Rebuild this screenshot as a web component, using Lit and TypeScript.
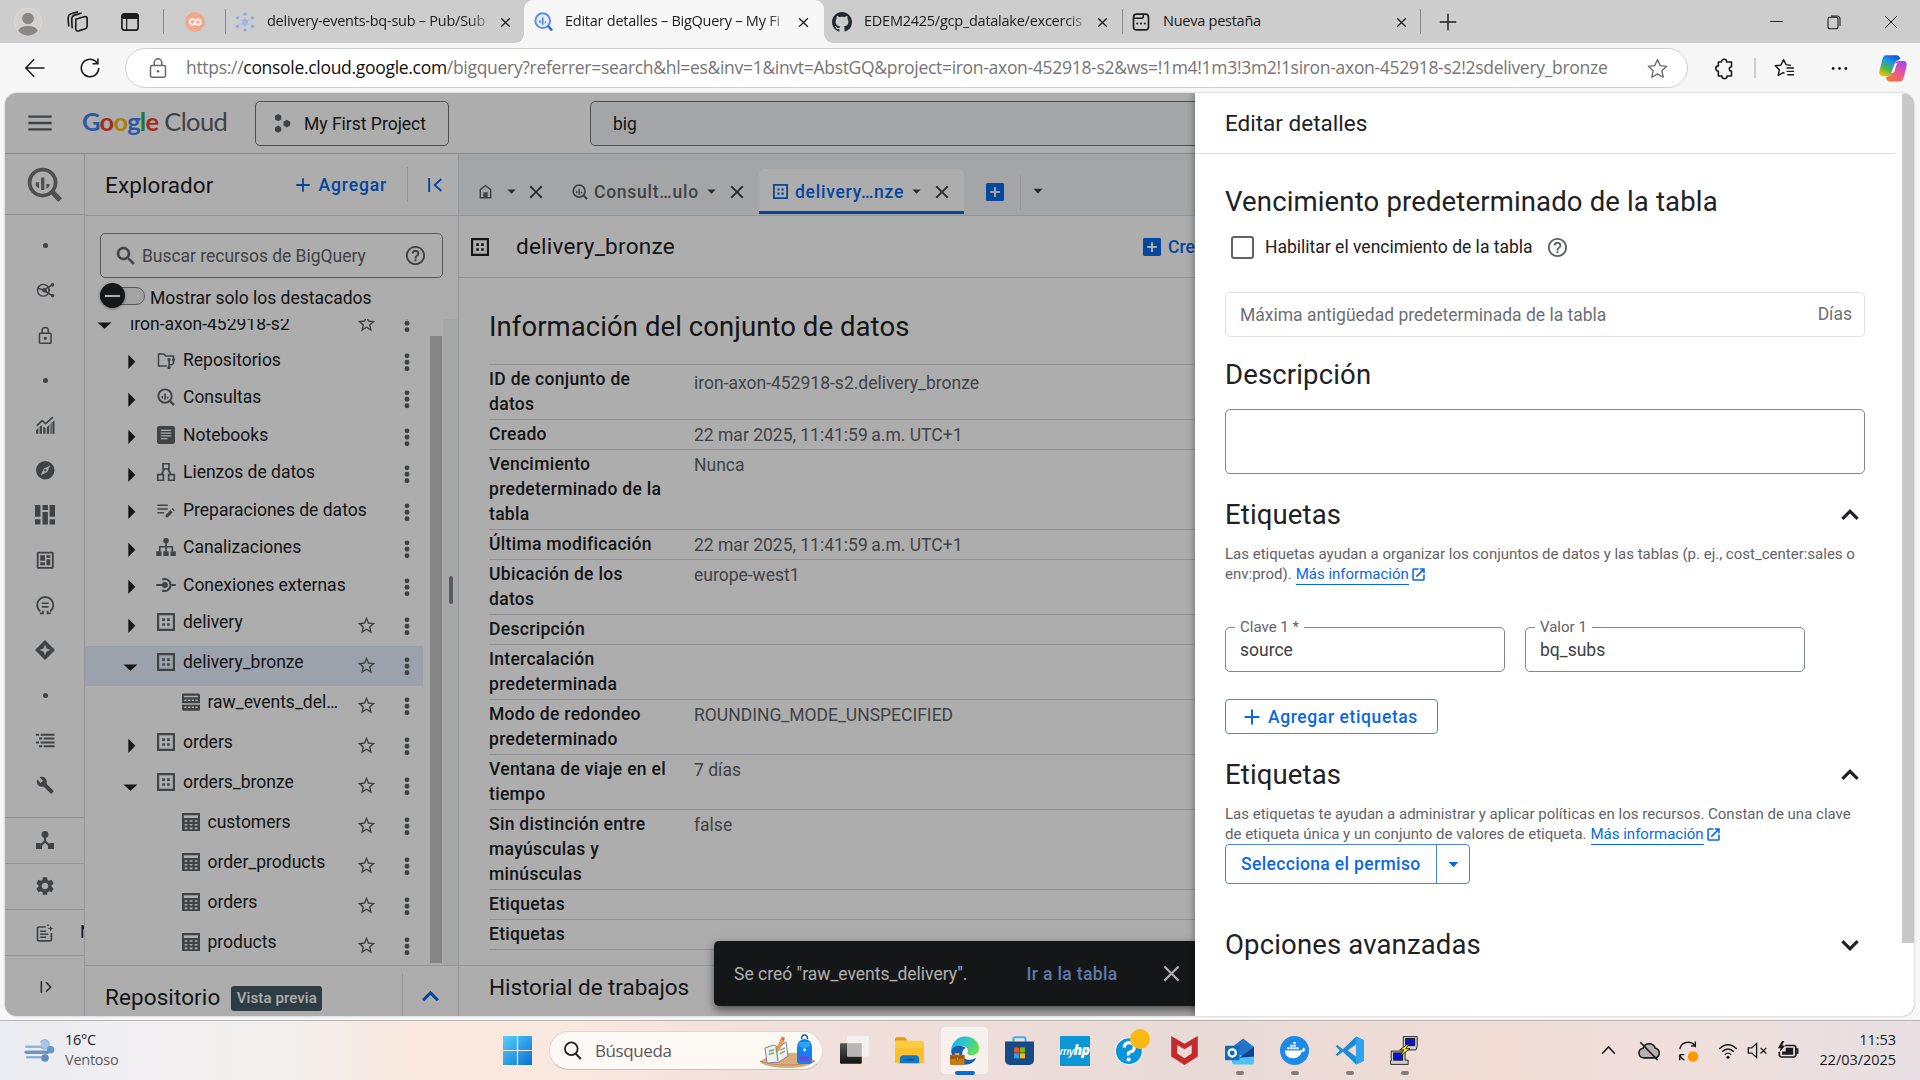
import { LitElement, html, css, svg, nothing } from "lit";
import { customElement, property } from "lit/decorators.js";

const ICONS: Record<string, unknown> = {
  menu: svg`<path d="M2 18.5h20v-2H2zm0-5.5h20v-2H2zm0-7.5v2h20v-2z"/>`,
  close: svg`<path d="M19 6.41 17.59 5 12 10.59 6.41 5 5 6.41 10.59 12 5 17.59 6.41 19 12 13.41 17.59 19 19 17.59 13.41 12z"/>`,
  thinClose: svg`<path d="M4 4l16 16M20 4L4 20" fill="none" stroke="currentColor" stroke-width="2.400"/>`,
  winClose: svg`<path d="M3 3l18 18M21 3L3 21" fill="none" stroke="currentColor" stroke-width="1.5"/>`,
  search: svg`<path d="M15.5 14h-.79l-.28-.27A6.47 6.47 0 0 0 16 9.5 6.5 6.5 0 1 0 9.5 16c1.61 0 3.09-.59 4.23-1.57l.27.28v.79l5 4.99L20.49 19zm-6 0C7.01 14 5 11.99 5 9.5S7.01 5 9.5 5 14 7.01 14 9.5 11.99 14 9.5 14z" stroke="currentColor" stroke-width=".6"/>`,
  help: svg`<path d="M11 18h2v-2h-2zm1-16C6.48 2 2 6.48 2 12s4.48 10 10 10 10-4.48 10-10S17.52 2 12 2zm0 18c-4.41 0-8-3.59-8-8s3.59-8 8-8 8 3.59 8 8-3.59 8-8 8zm0-14c-2.21 0-4 1.79-4 4h2c0-1.1.9-2 2-2s2 .9 2 2c0 2-3 1.75-3 5h2c0-2.25 3-2.5 3-5 0-2.21-1.79-4-4-4z"/>`,
  star: svg`<path d="M22 9.24l-7.19-.62L12 2 9.19 8.63 2 9.24l5.46 4.73L5.82 21 12 17.27 18.18 21l-1.63-7.03zM12 15.4l-3.76 2.27 1-4.28-3.32-2.88 4.38-.38L12 6.1l1.71 4.04 4.38.38-3.32 2.88 1 4.28z"/>`,
  dots: svg`<circle cx="12" cy="3.8" r="3.3"/><circle cx="12" cy="12.4" r="3.3"/><circle cx="12" cy="21" r="3.3"/>`,
  add: svg`<path d="M21 13.2h-7.8V21h-2.4v-7.8H3v-2.4h7.8V3h2.4v7.8H21z"/>`,
  addBox: svg`<path fill-rule="evenodd" d="M2 0h20a2 2 0 0 1 2 2v20a2 2 0 0 1-2 2H2a2 2 0 0 1-2-2V2a2 2 0 0 1 2-2zm8.6 5.500v5.100H5.500v2.800h5.100v5.100h2.800v-5.100h5.100v-2.800h-5.100V5.500z"/>`,
  up: svg`<path d="M12 7.200l-7 7 1.800 1.800L12 10.800l5.200 5.200 1.800-1.800z"/>`,
  down: svg`<path d="M12 16.800l-7-7L6.800 8l5.200 5.200L17.200 8 19 9.800z"/>`,
  caret: svg`<path d="M3 7.500h18L12 17z"/>`,
  triRight: svg`<path d="M7.500 2.500L17.500 12.500 7.500 22.500z"/>`,
  triDown: svg`<path d="M.5 10.500h20l-10 9z"/>`,
  collapseLine: svg`<path d="M3.200 1.500v21M21.500 3L11.500 12l10 9" fill="none" stroke="currentColor" stroke-width="2.800"/>`,
  expandLine: svg`<path d="M4 2v20M12 4l8 8-8 8" fill="none" stroke="currentColor" stroke-width="2.600"/>`,
  hex: svg`<path d="M6.500 0l4 2.300v4.600l-4 2.300-4-2.300V2.300zM6.500 14.600l4 2.300v4.600l-4 2.300-4-2.300v-4.600zM17.500 7.300l4.300 2.400v4.800l-4.300 2.400-4.300-2.400V9.700z"/>`,
  bq: svg`<circle cx="10.700" cy="10.700" r="8.900" fill="none" stroke="currentColor" stroke-width="2.600"/><path d="M6 10.500h2.200v4.300A6 6 0 0 1 6 12.600zM9.700 7.200h2.200v8.600H9.700zM13.300 11.700h2.200v1.200a6 6 0 0 1-2.200 2z"/><path d="M17 18.600l1.700-1.700 4.600 4.600-1.800 1.800z" stroke="currentColor"/>`,
  hub: svg`<circle cx="9.500" cy="12" r="7.600" fill="none" stroke="currentColor" stroke-width="1.800"/><path d="M2 9l8 3 11-7M10 12l11 7" fill="none" stroke="currentColor" stroke-width="2"/><circle cx="11" cy="12" r="3"/><circle cx="21.500" cy="5" r="2.300"/><circle cx="21.500" cy="19" r="2.300"/><circle cx="17" cy="12" r="1.500"/>`,
  lock: svg`<path d="M18.500 8.500H17V6A5 5 0 0 0 7 6v2.500H5.500a2 2 0 0 0-2 2v11a2 2 0 0 0 2 2h13a2 2 0 0 0 2-2v-11a2 2 0 0 0-2-2zM9 6a3 3 0 0 1 6 0v2.500H9zm9.500 15.500h-13v-11h13zM12 18.200a2.200 2.200 0 1 0 0-4.400 2.200 2.200 0 0 0 0 4.400z"/>`,
  chart: svg`<path d="M1 12.500L8 6l4.500 4L22 1.500" fill="none" stroke="currentColor" stroke-width="2.200"/><path d="M0 18l3-2.500V23H0zM4.700 14l3-2.400V23h-3zM9.400 14l3 1.500V23h-3zM14.100 14.500l3-3V23h-3zM18.800 10L24 5.500V23h-5.200z"/><path d="M20.800 9v14" stroke="#fff" stroke-width="1"/>`,
  explore: svg`<path d="M12 10.500a1.500 1.500 0 1 0 0 3 1.500 1.500 0 0 0 0-3zM12 0a12 12 0 1 0 0 24 12 12 0 0 0 0-24zm2.400 14.400L6 18.500l4.100-8.600 8.400-4.400z"/>`,
  blocks: svg`<path d="M0 0h6.500v14H0zM0 17h6.500v6.500H0zM9 0h6.500v6H9zM9 8.500h6.500v15H9zM17.500 0H24v14h-6.500zM17.500 17H24v6.500h-6.500z"/>`,
  dash: svg`<path fill-rule="evenodd" d="M3 1h18a2 2 0 0 1 2 2v18a2 2 0 0 1-2 2H3a2 2 0 0 1-2-2V3a2 2 0 0 1 2-2zm.4 2.400v17.200h17.200V3.400z"/><path d="M5.500 5.500h6v7h-6zM13.500 5.500h5v3.200h-5zM5.500 14.500h6v4h-6zM13.500 10.700h5v7.800h-5z"/>`,
  storage: svg`<path d="M5.500 20A10.500 10.500 0 1 1 18.500 20M5 22.500h4V19M19 22.500h-4V19" fill="none" stroke="currentColor" stroke-width="2.400"/><path d="M7.500 8.300h9v2.200h-9zM7.500 13h9v2.200h-9z"/>`,
  diamond: svg`<path fill-rule="evenodd" d="M12 0l12 12-12 12L0 12zm0 5.500L10.200 10.200 5.500 12l4.700 1.800L12 18.500l1.800-4.700 4.700-1.800-4.700-1.800z"/>`,
  list: svg`<path d="M0 3.500h4v2.600H0zM6 3.500h18v2.600H6zM4 8.500h4v2.600H4zM10 8.500h14v2.600H10zM0 13.500h4v2.600H0zM6 13.500h18v2.600H6zM4 18.500h4v2.600H4zM10 18.500h14v2.600H10z"/>`,
  build: svg`<path d="M22.700 19l-9.100-9.100c.9-2.300.4-5-1.500-6.900-2-2-5-2.400-7.400-1.300L9 6 6 9 1.600 4.700C.4 7.100.9 10.100 2.900 12.100c1.900 1.900 4.600 2.400 6.900 1.500l9.100 9.100c.4.400 1 .4 1.400 0l2.300-2.300c.5-.4.5-1.100.1-1.400z"/>`,
  share: svg`<circle cx="12" cy="4.500" r="4.500"/><path d="M10.700 7h2.600v6l4.700 4.200V16H24v8h-8v-4.400l-4-4-4 4V24H0v-8h6v1.200l4.700-4.200z"/>`,
  gear: svg`<path d="M19.140 12.940c.04-.3.06-.61.06-.94 0-.32-.02-.64-.07-.94l2.030-1.580c.18-.14.23-.41.12-.61l-1.920-3.320c-.12-.22-.37-.29-.59-.22l-2.390.96c-.5-.38-1.030-.7-1.620-.94l-.36-2.540c-.04-.24-.24-.41-.48-.41h-3.840c-.24 0-.43.17-.47.41l-.36 2.540c-.59.24-1.130.57-1.620.94l-2.390-.96c-.22-.08-.47 0-.59.22L2.740 8.870c-.12.21-.08.47.12.61l2.030 1.580c-.05.3-.09.63-.09.94s.02.64.07.94l-2.030 1.580c-.18.14-.23.41-.12.61l1.920 3.320c.12.22.37.29.59.22l2.390-.96c.5.38 1.030.7 1.620.94l.36 2.540c.05.24.24.41.48.41h3.840c.24 0 .44-.17.47-.41l.36-2.540c.59-.24 1.130-.56 1.620-.94l2.390.96c.22.08.47 0 .59-.22l1.920-3.320c.12-.22.07-.47-.12-.61zM12 15.600c-1.980 0-3.600-1.620-3.600-3.600s1.620-3.600 3.600-3.600 3.600 1.620 3.600 3.600-1.620 3.600-3.600 3.600z"/>`,
  notes: svg`<path d="M13 4H4a2 2 0 0 0-2 2v14.500a2 2 0 0 0 2 2h14.500a2 2 0 0 0 2-2V12" fill="none" stroke="currentColor" stroke-width="2.300"/><path d="M5.500 8.500h8v2h-8zM5.500 12.500h11v2h-11zM5.500 16.500h8v2h-8zM19.500 2l1 3 3 1-3 1-1 3-1-3-3-1 3-1z"/><circle cx="16" cy="1.500" r="1.200"/>`,
  repo: svg`<path d="M13 20H2V4h7l2.500 2.500H22V10" fill="none" stroke="currentColor" stroke-width="2"/><path d="M16 12v9M22 12v3.500q0 2.500-6 3" fill="none" stroke="currentColor" stroke-width="2"/><circle cx="16" cy="11.500" r="2.200"/><circle cx="22" cy="11.500" r="2.200"/><circle cx="16" cy="22" r="2.200"/>`,
  notebook: svg`<path fill-rule="evenodd" d="M3 0h18a3 3 0 0 1 3 3v18a3 3 0 0 1-3 3H3a3 3 0 0 1-3-3V3a3 3 0 0 1 3-3zm2 5v1.600h14V5zm0 3.700v1.600h14V8.700zm0 3.700V14h14v-1.600zm0 3.700v1.600h9v-1.600z"/>`,
  canvas: svg`<path d="M8 1h8v7H8zM1 15.500h7.500v7.500H1zM15.500 15.500H23v7.500h-7.500zM9.500 8L6 15.500M14.500 8l4 7.500" fill="none" stroke="currentColor" stroke-width="2.300"/>`,
  prep: svg`<path d="M1 3.500h14v2.200H1zM1 8.500h14v2.200H1zM1 13.500h9v2.200H1zM12 20.500v-3l6.500-6.500 3 3L15 20.500zM20 9.600l1.300-1.300 3 3L23 12.500z" transform="translate(-.5 1)"/>`,
  tree: svg`<circle cx="12" cy="3.700" r="3.700"/><path d="M11 6h2.200v12H11zM2.500 10.700h19V18h-2.200v-5.200H4.700V18H2.500z"/><path d="M-1 17.500h7V24h-7zM8.500 17.500h7V24h-7zM18 17.500h7V24h-7z"/>`,
  link: svg`<circle cx="10.500" cy="12" r="4"/><path d="M-1 10.800h11v2.400H-1zM19 10.800h6v2.400h-6z"/><path d="M7 4.600a8 8 0 1 1 0 14.800" fill="none" stroke="currentColor" stroke-width="2.700"/>`,
  dataset: svg`<path fill-rule="evenodd" d="M0 0h24v24H0zM2.900 2.900v18.200h18.200V2.900z"/><path d="M7 7h3.500v3.500H7zM13.500 7H17v3.500h-3.500zM7 13.500h3.500V17H7zM13.500 13.500H17V17h-3.500z"/>`,
  table: svg`<path fill-rule="evenodd" d="M0 0h24v24H0zM2.500 3v3.500h19V3zM3.500 9.500v2.300h3.700V9.500zm6.700 0v2.300h3.700V9.500zm6.700 0v2.300h3.700V9.500zM3.500 14.500v2.300h3.700v-2.300zm6.700 0v2.300h3.700v-2.300zm6.700 0v2.300h3.700v-2.300zM3.500 19.300v2.300h3.700v-2.300zm6.700 0v2.300h3.700v-2.300zm6.700 0v2.300h3.700v-2.300z"/>`,
  tableSplit: svg`<path fill-rule="evenodd" d="M2 .5h20a2 2 0 0 1 2 2v11H0v-11a2 2 0 0 1 2-2zm.5 3v2.200h19V3.500zm.5 5v2h3v-2zm5 0v2h3v-2zm5 0v2h3v-2zm5 0v2h3v-2zM0 15.500h24v6a2 2 0 0 1-2 2H2a2 2 0 0 1-2-2zm3 2.500v2h3v-2zm5 0v2h3v-2zm5 0v2h3v-2zm5 0v2h3v-2z"/>`,
  home: svg`<path fill-rule="evenodd" d="M12 1l9.500 7.500V23h-19V8.500zm0 2.900L4.900 9.500v11.200h14.200V9.500z"/><path d="M8.500 13h7v8h-7z"/>`,
  ext: svg`<path d="M19.500 19.500h-15v-15H12V2H4.500A2.500 2.500 0 0 0 2 4.500v15A2.500 2.500 0 0 0 4.500 22h15a2.500 2.500 0 0 0 2.500-2.500V12h-2.500zM14 2v2.500h3.700L7.700 14.500l1.800 1.800 10-10V10H22V2z"/>`,
  back: svg`<path d="M23.500 12H1M11 1.500L.9 12 11 22.500" fill="none" stroke="currentColor" stroke-width="1.800"/>`,
  refresh: svg`<path d="M22.500 12A10.500 10.500 0 1 1 18.500 3.800L21 6.500M21.500 .5v6.500H15" fill="none" stroke="currentColor" stroke-width="1.800"/>`,
  urlLock: svg`<path d="M5 9h14a2 2 0 0 1 2 2v10a2 2 0 0 1-2 2H5a2 2 0 0 1-2-2V11a2 2 0 0 1 2-2zM7.500 9V5.500a4.500 4.500 0 0 1 9 0V9" fill="none" stroke="currentColor" stroke-width="1.800"/><circle cx="12" cy="16" r="1.500"/>`,
  urlStar: svg`<path d="M12 1.800l3.100 6.900 7.400.8-5.500 5 1.500 7.500-6.500-3.800L5.500 22 7 14.500l-5.500-5 7.400-.8z" fill="none" stroke="currentColor" stroke-width="1.500" stroke-linejoin="round"/>`,
  puzzle: svg`<path d="M8.500 4.500a3 3 0 0 1 6 0H20v5.500a2.500 2.500 0 0 0 0 5V20.500h-5a3 3 0 0 1-6 0H5V15a3 3 0 0 1 0-6V4.500z" fill="none" stroke="currentColor" stroke-width="1.800" stroke-linejoin="round"/>`,
  favs: svg`<path d="M12.500 18.500l-1.500-1L5 21l1.500-7-5-4.700 6.800-.8L11.500 2l3 6 6 .8M15 12h9M15 16h9M16 20h8" fill="none" stroke="currentColor" stroke-width="1.700" stroke-linejoin="round"/>`,
  more: svg`<circle cx="3" cy="12" r="2"/><circle cx="12" cy="12" r="2"/><circle cx="21" cy="12" r="2"/>`,
  copilot: svg`<path d="M6 1h9q2.500 0 3.300 3L16 5.500q-2 0-3 3.500l-2 7q-1 3-4 3H3q-3.500 0-2.500-5l2-8Q3.500 1 6 1z" fill="url(#cpA)"/><path d="M18 23.500H9q-2.500 0-3-3.500l2-1q2 0 3-3l2-7q1-3 4-3h4q3.500 0 2.500 5l-2 8q-1.200 4.500-3.500 4.500z" fill="url(#cpB)"/><path d="M13.500 8.500l-3 7.500h1.500q1-.2 1.500-2l1.500-5q.3-.8 1.500-1h-1q-1.500-.3-2 .5z" fill="#fff"/><defs><linearGradient id="cpA" x1=".7" y1="0" x2=".2" y2="1"><stop offset="0" stop-color="#1552d8"/><stop offset=".35" stop-color="#1a9be8"/><stop offset=".65" stop-color="#4fb44a"/><stop offset="1" stop-color="#f5c400"/></linearGradient><linearGradient id="cpB" x1=".8" y1="0" x2=".2" y2="1"><stop offset="0" stop-color="#a04be8"/><stop offset=".5" stop-color="#ee5597"/><stop offset="1" stop-color="#f5792a"/></linearGradient></defs>`,
  avatar: svg`<circle cx="12" cy="12" r="11.700" fill="#d3d1cd" stroke="#e4e2df" stroke-width=".6"/><circle cx="12" cy="9" r="5" fill="#8a8784"/><path d="M3.500 19.500Q5 15.500 12 15.500t8.500 4A11.700 11.700 0 0 1 12 23.700a11.700 11.700 0 0 1-8.500-4.200z" fill="#8a8784"/>`,
  workspaces: svg`<path d="M10 9.500l9.500-3q3-.7 3.500 2v9q0 2-2 2.700l-7.500 2.500q-3 .8-3.500-2zM6 19q-.500-3-.500-10.500Q5.500 6 8 5l8-2.500M2 17Q1 10 1.500 6.500 1.700 4.200 4 3.500L12 1" fill="none" stroke="currentColor" stroke-width="1.900" stroke-linecap="round"/>`,
  sideTabs: svg`<rect x="1.200" y="1.200" width="21.600" height="21.600" rx="3" fill="none" stroke="currentColor" stroke-width="2.200"/><path d="M1 3a2 2 0 0 1 2-2h18a2 2 0 0 1 2 2v5H1z"/><path d="M7.500 8v15" stroke="currentColor" stroke-width="1.800"/>`,
  moodle: svg`<circle cx="12" cy="12" r="12" fill="#f0a88c"/><path d="M11.500 9.800A3.300 3.300 0 1 0 11.500 14.200L13 10A3.300 3.300 0 1 1 13 14.200" fill="none" stroke="#f7e8e0" stroke-width="2.700"/>`,
  pubsub: svg`<g fill="#8ea9e6"><circle cx="12" cy="12" r="3.500"/><circle cx="12" cy="2.500" r="2"/><circle cx="12" cy="21.500" r="2"/><circle cx="3" cy="7" r="2"/><circle cx="21" cy="7" r="2"/><circle cx="3" cy="17" r="2"/><circle cx="21" cy="17" r="2"/></g><path d="M12 6v12M6.500 9l11 6M17.500 9L6.500 15" stroke="#a9bdea" stroke-width="1.600"/>`,
  bqBlue: svg`<circle cx="11" cy="11" r="9.300" fill="#e9f0fd" stroke="#5b8df0" stroke-width="2.500"/><path d="M6.500 10.500h2v4a5 5 0 0 1-2-2zM10 7h2v9h-2zM13.500 12h2v1a5 5 0 0 1-2 2z" fill="#4a7fe8"/><path d="M17 18.500l1.500-1.500 5 5-2 1.800z" fill="#2f66d8" stroke="#2f66d8"/>`,
  newTab: svg`<rect x="2" y="1.500" width="20" height="21" rx="4" fill="none" stroke="currentColor" stroke-width="2.200"/><path d="M2 7h11q2 0 2-2V1.500" fill="none" stroke="currentColor" stroke-width="2"/><circle cx="7" cy="14" r="1.400"/><circle cx="12" cy="14" r="1.400"/><circle cx="17" cy="14" r="1.400"/>`,
  github: svg`<path transform="scale(1.5)" d="M8 0C3.580 0 0 3.580 0 8c0 3.540 2.290 6.530 5.470 7.590.4.070.55-.17.55-.38 0-.19-.01-.82-.01-1.490-2.010.37-2.530-.49-2.690-.94-.09-.23-.48-.94-.82-1.130-.28-.15-.68-.52-.01-.53.63-.01 1.080.58 1.230.82.72 1.210 1.870.87 2.330.66.070-.52.28-.87.51-1.070-1.780-.2-3.640-.89-3.640-3.950 0-.87.31-1.590.82-2.150-.08-.2-.36-1.020.080-2.120 0 0 .67-.21 2.200.82.64-.18 1.320-.27 2-.27s1.360.09 2 .27c1.530-1.040 2.200-.82 2.200-.82.44 1.100.16 1.920.08 2.120.51.56.82 1.270.82 2.150 0 3.070-1.870 3.750-3.650 3.950.29.25.54.73.54 1.480 0 1.070-.01 1.930-.01 2.200 0 .21.15.46.55.38A8.010 8.010 0 0 0 16 8c0-4.420-3.580-8-8-8z" fill="#24292f"/>`,
  minimize: svg`<path d="M2 11.300h20v1.500H2z"/>`,
  restore: svg`<path d="M5 5h10a3 3 0 0 1 3 3v11a3 3 0 0 1-3 3H6a3 3 0 0 1-3-3V8q0-3 2-3zM7.500 3h9Q21 3 21 7.500V18" fill="none" stroke="currentColor" stroke-width="1.600"/>`,
  plusThin: svg`<path d="M12 1v22M1 12h22" stroke="currentColor" stroke-width="1.900"/>`,
  wind: svg`<path d="M1 8.500h15" stroke="#8fb5da" stroke-width="2" stroke-linecap="round"/><path d="M12.500 8.700a3.700 3.700 0 1 0 0-4" fill="#a9c8e8" stroke="#8fb5da"/><path d="M1 13h17" stroke="#6d97c0" stroke-width="2.800" stroke-linecap="round"/><circle cx="20.500" cy="11" r="3" fill="#6d97c0"/><path d="M1 17h13" stroke="#88add2" stroke-width="1.800"/><circle cx="16" cy="17.500" r="3" fill="#5f8cb8"/>`,
  windows: svg`<defs><linearGradient id="wn" x1="0" y1="0" x2="1" y2="1"><stop offset="0" stop-color="#56d0ff"/><stop offset="1" stop-color="#0a6fd0"/></linearGradient></defs><path fill="url(#wn)" d="M0 0h11.500v11.500H0zM12.500 0H24v11.500H12.500zM0 12.500h11.500V24H0zM12.500 12.500H24V24H12.500z"/>`,
  winSearch: svg`<circle cx="10.500" cy="9.800" r="8" fill="none" stroke="currentColor" stroke-width="2.300"/><path d="M16 16l6.500 6.800" stroke="currentColor" stroke-width="2.500"/>`,
  taskview: svg`<defs><linearGradient id="tv" x1="0" y1="0" x2="0" y2="1"><stop offset="0" stop-color="#555"/><stop offset="1" stop-color="#111"/></linearGradient></defs><rect x="0" y="6" width="18" height="17" rx="1" fill="url(#tv)"/><rect x="6" y="0" width="18" height="17" rx="1" fill="#f6f4f4" opacity=".88"/><rect x="6" y="6" width="12" height="11" fill="#b9b6b5"/>`,
  folder: svg`<path d="M0 2.500a1.500 1.500 0 0 1 1.500-1.500H8l2.500 3H0z" fill="#e0a100"/><path d="M0 4h22.500A1.500 1.500 0 0 1 24 5.500V22.500H0z" fill="#ffcb3d"/><path d="M0 10h24v12.500H0z" fill="#fbbf2c"/><path d="M4 22.500V19q0-3 3-3h10q3 0 3 3v3.500z" fill="#1478c8"/><path d="M8 19.500h8" stroke="#0a4f94" stroke-width="1.200"/>`,
  edge: svg`<defs><linearGradient id="eg" x1="0" y1="0" x2="1" y2=".4"><stop offset="0" stop-color="#2aa8e8"/><stop offset=".55" stop-color="#2fc8c8"/><stop offset="1" stop-color="#64dc58"/></linearGradient></defs><path d="M1 12A11.500 11.500 0 0 1 12.500 .5C19.500 .5 24 5 24 10c0 4-3 6-6 6-2.500 0-4-1-3.500-2.300C16 10.500 13 8 9.500 8 5 8 2 11 1 12z" fill="url(#eg)"/><path d="M1 12c1-2.500 4.500-4.200 8-3.800 2.500.3 4.500 1.800 4.500 1.800-2.500.5-3.500 3-3.300 5 .4 3.500 4 5.500 8 4.500 1.500-.3 3-1.200 3.500-1.200C20 22 16.500 23.700 12.500 23.700 6 23.700 1 18.500 1 12z" fill="#155fb5"/><rect x="0" y="15.500" width="12" height="8.500" rx=".8" fill="#c57a16"/><path d="M0 16h12v3H0z" fill="#a35c0c"/><path d="M4 15.500v-1.500h4v1.500M5.300 18h1.400v2H5.300z" fill="#ffd27a" stroke="#8a4b06" stroke-width=".6"/>`,
  store: svg`<path d="M7 5V2.500Q7 1 8.500 1h7Q17 1 17 2.500V5" fill="none" stroke="#3bb3ee" stroke-width="1.700"/><path d="M0 4.500h24V20a4 4 0 0 1-4 4H4a4 4 0 0 1-4-4z" fill="#174a84"/><path d="M7.500 9.500h4.200v4.200H7.500z" fill="#f25022"/><path d="M12.300 9.500h4.200v4.200h-4.200z" fill="#7fba00"/><path d="M7.500 14.300h4.200v4.200H7.500z" fill="#28a8ea"/><path d="M12.300 14.300h4.200v4.200h-4.200z" fill="#ffb900"/>`,
  question: svg`<circle cx="11.500" cy="12.500" r="11.200" fill="#0b95d8" stroke="#e9f3f9" stroke-width="1"/><path d="M7.500 9.500Q8 5.500 12 5.500t4 3.500-3 4-1.500 3" fill="none" stroke="#fff" stroke-width="2.600"/><circle cx="11.300" cy="19.500" r="1.700" fill="#fff"/>`,
  mcafee: svg`<path d="M1 0l11 6.500L23 0v17L12 24 1 17zM6 7.500v7l6 4 6-4v-7L12 11z" fill="#c22a30" fill-rule="evenodd"/>`,
  outlook: svg`<path d="M6 9L15 2l9 7v13H6z" fill="#2474c8"/><path d="M6 12l9 5 9-6v11a1.500 1.500 0 0 1-1.500 1.500h-15A1.500 1.500 0 0 1 6 22z" fill="#4bc3f2"/><path d="M24 9L12 18l12-1z" fill="#103f91"/><rect x="0" y="8" width="12" height="12" rx="1" fill="#0f6cbf"/><circle cx="6" cy="14" r="3" fill="none" stroke="#fff" stroke-width="1.900"/>`,
  docker: svg`<circle cx="12" cy="12" r="12" fill="#1d8ae8"/><path d="M4 12h12.500q2 0 3-2.500 1 .5 1.500 2-1 1.500-3 1.700Q16 18.500 10.500 18.500 4.500 18.500 4 12zM6 9.300h2V11H6zM8.500 9.300h2V11h-2zM11 9.300h2V11h-2zM13.500 9.300h2V11h-2zM8.500 7.200h2v1.700h-2zM11 7.200h2v1.700h-2zM11 5h2v1.700h-2z" fill="#fff"/>`,
  vscode: svg`<path d="M17.500 .5L24 3.500v17l-6.500 3L6.500 13 2 16.500.500 15.500 4 12 .5 8.500 2 7.500l4.500 3.500zM17.500 6.800L10.500 12l7 5.200z" fill="#1f8ad2" fill-rule="evenodd"/><path d="M17.500 .5L24 3.500v17l-6.500 3z" fill="#2fa4ee"/>`,
  putty: svg`<g stroke="#111" stroke-width=".7"><path d="M11 .5h11.500v8.500l-1 2.500H11z" fill="#cfcfc8"/><rect x="13" y="2" width="7.500" height="6" fill="#0b12d8"/><path d="M1 12.500h11.500V20H15v3.500H.5V20.500h.5z" fill="#cfcfc8"/><rect x="3" y="14" width="7.500" height="6" fill="#0b12d8"/><path d="M17 5l-9 6.500h3.500L8 17l8.500-6.500H13z" fill="#f5ee1a"/></g>`,
  chevUp: svg`<path d="M3 16.500L12 7l9 9.500" fill="none" stroke="currentColor" stroke-width="2.200"/>`,
  cloudOff: svg`<path d="M6 19.500a5.300 5.300 0 0 1-.5-10.500 7 7 0 0 1 13.300 0A5.300 5.300 0 0 1 18 19.500z" fill="#b9b1af" stroke="currentColor" stroke-width="1.700"/><path d="M2.500 2.500l19 19.500" stroke="currentColor" stroke-width="1.700"/>`,
  sync: svg`<path d="M3 10Q5 2.500 12 2.500q5 0 8 4V1.500M20.500 6.500H15.500M8 22Q4 20 3 16v6M3 16h5" fill="none" stroke="currentColor" stroke-width="1.500"/><circle cx="17.500" cy="18" r="5.700" fill="#ff9800"/>`,
  wifi: svg`<path d="M1.500 9.500Q12 -.5 22.500 9.500M4.800 13Q12 6 19.200 13M8.200 16.500Q12 12.500 15.800 16.500" fill="none" stroke="currentColor" stroke-width="1.700"/><circle cx="12" cy="19.500" r="1.900"/>`,
  mute: svg`<path d="M1.500 9h4L11 4v16l-5.500-5h-4zM15.500 9l6.500 6.500M22 9l-6.500 6.500" fill="none" stroke="currentColor" stroke-width="1.500"/>`,
  battery: svg`<path d="M9 6h9a2.500 2.500 0 0 1 2.500 2.500v7A2.500 2.500 0 0 1 18 18.500H5A2.500 2.500 0 0 1 2.500 16v-3M20.500 10h2v4h-2" fill="none" stroke="currentColor" stroke-width="1.800"/><path d="M9.500 8.500h8.200v7.500H5.500v-3.500h4zM5.500 1L1 9h3L2.500 13.500 9 6H5.500L8 1z"/>`,
};

const icon = (name: string, size: number) =>
  html`<svg class="icon" width=${size} height=${size} viewBox="0 0 24 24" fill="currentColor">${ICONS[name]}</svg>`;

const shared = css`
  *, *::before { box-sizing: border-box; }
  :host { display: block; font-family: Roboto, "Liberation Sans", sans-serif; color: #202124; }
  .icon { display: block; flex: none; overflow: visible; }
`;

@customElement("browser-bar")
class BrowserBar extends LitElement {
  static styles = [shared, css`
    :host { font-family: "Open Sans", "Noto Sans", sans-serif; color: #1b1b1b; }
    .tabs { height: 43px; background: #cdcdcd; display: flex; align-items: center; }
    .ava { margin-left: 14px; } .ws { margin-left: 25px; } .st { margin-left: 33px; }
    .sep { width: 1px; height: 25px; background: #8a8a8a; flex: none; }
    .s1 { margin-left: 24px; } .co { margin: 0 20px 0 21px; }
    .tab { height: 43px; display: flex; align-items: center; width: 300px; padding: 0 0 0 9px; flex: none; position: relative; }
    .first, .third { width: 298px; } .last { width: 297px; }
    .third, .last { padding-left: 8px; }
    .fav { width: 20px; display: grid; place-items: center; flex: none; }
    .tab .t { margin-left: 12px; width: 224px; white-space: nowrap; overflow: hidden; font-size: 14.500px; line-height: 30px; margin-top: -2px; letter-spacing: -.25px; }
    .tab.fade .t { -webkit-mask-image: linear-gradient(90deg, #000 90%, #0003 100%); mask-image: linear-gradient(90deg, #000 90%, #0003 100%); }
    .tab .x { margin-left: 8px; margin-top: 1px; }
    .tab.on { background: #f7f7f7; border-radius: 9px 9px 0 0; }
    .tab.on::before { content: ""; position: absolute; left: -9px; right: -9px; bottom: 0; height: 9px;
      background: radial-gradient(circle at 0 0, transparent 8.500px, #f7f7f7 9px) 0 0 / 9px 9px no-repeat,
                  radial-gradient(circle at 100% 0, transparent 8.500px, #f7f7f7 9px) 100% 0 / 9px 9px no-repeat; }
    .plus { margin-left: 18px; } .min { margin-left: 312px; } .res { margin-left: 42px; } .cls { margin-left: 41px; }
    .bar { height: 50px; background: #f7f7f7; display: flex; align-items: center; padding-left: 25px; }
    .ref { margin-left: 35px; }
    .url { margin-left: 25px; width: 1563px; height: 40px; border: 1px solid #cfcfcf; border-radius: 20px; background: #fff; display: flex; align-items: center; color: #666; padding: 0 19px 0 22px; }
    .url .u { margin-left: 18px; flex: 1; font-size: 17.500px; letter-spacing: -.3px; color: #757575; white-space: nowrap; line-height: 36px; margin-top: -2px; }
    .url b { font-weight: 400; color: #111; }
    .puz { margin-left: 26px; } .vs { width: 2px; height: 20px; background: #cfcfcf; margin: 0 18px 0 19px; }
    .mor { margin-left: 37px; } .cop { margin-left: 31px; }
  `];
  render() {
    return html`
      <div class="tabs">
        <span class="ava">${icon("avatar", 28)}</span>
        <span class="ws">${icon("workspaces", 21)}</span>
        <span class="st">${icon("sideTabs", 18)}</span>
        <i class="sep s1"></i>
        <span class="co">${icon("moodle", 20)}</span>
        <i class="sep"></i>
        <div class="tab first fade"><span class="fav">${icon("pubsub", 20)}</span><span class="t">delivery-events-bq-sub – Pub/Sub</span><span class="x">${icon("thinClose", 13)}</span></div>
        <div class="tab fade on"><span class="fav">${icon("bqBlue", 19)}</span><span class="t">Editar detalles – BigQuery – My Fi</span><span class="x">${icon("thinClose", 13)}</span></div>
        <div class="tab third fade"><span class="fav">${icon("github", 20)}</span><span class="t">EDEM2425/gcp_datalake/excercis</span><span class="x">${icon("thinClose", 13)}</span></div>
        <i class="sep"></i>
        <div class="tab last"><span class="fav">${icon("newTab", 18)}</span><span class="t">Nueva pestaña</span><span class="x">${icon("thinClose", 13)}</span></div>
        <i class="sep"></i>
        <span class="plus">${icon("plusThin", 18)}</span>
        <span class="min">${icon("minimize", 15)}</span>
        <span class="res">${icon("restore", 16)}</span>
        <span class="cls">${icon("winClose", 16)}</span>
      </div>
      <div class="bar">
        ${icon("back", 20)}<span class="ref">${icon("refresh", 20)}</span>
        <div class="url">${icon("urlLock", 20)}<span class="u">https://<b>console.cloud.google.com</b>/bigquery?referrer=search&amp;hl=es&amp;inv=1&amp;invt=AbstGQ&amp;project=iron-axon-452918-s2&amp;ws=!1m4!1m3!3m2!1siron-axon-452918-s2!2sdelivery_bronze</span>${icon("urlStar", 21)}</div>
        <span class="puz">${icon("puzzle", 21)}</span><i class="vs"></i>${icon("favs", 20)}
        <span class="mor">${icon("more", 17)}</span><span class="cop">${icon("copilot", 28)}</span>
      </div>`;
  }
}

type TreeItem = { label: string; level: number; icon?: string; open?: boolean; kind: string };
const TREE: TreeItem[] = [
  { label: "iron-axon-452918-s2", level: 0, open: true, kind: "project" },
  { label: "Repositorios", level: 1, icon: "repo", kind: "group" },
  { label: "Consultas", level: 1, icon: "bq", kind: "group" },
  { label: "Notebooks", level: 1, icon: "notebook", kind: "group" },
  { label: "Lienzos de datos", level: 1, icon: "canvas", kind: "group" },
  { label: "Preparaciones de datos", level: 1, icon: "prep", kind: "group" },
  { label: "Canalizaciones", level: 1, icon: "tree", kind: "group" },
  { label: "Conexiones externas", level: 1, icon: "link", kind: "group" },
  { label: "delivery", level: 1, icon: "dataset", kind: "item" },
  { label: "delivery_bronze", level: 1, icon: "dataset", open: true, kind: "item selected" },
  { label: "raw_events_del…", level: 2, icon: "tableSplit", kind: "item" },
  { label: "orders", level: 1, icon: "dataset", kind: "item" },
  { label: "orders_bronze", level: 1, icon: "dataset", open: true, kind: "item" },
  { label: "customers", level: 2, icon: "table", kind: "item" },
  { label: "order_products", level: 2, icon: "table", kind: "item" },
  { label: "orders", level: 2, icon: "table", kind: "item" },
  { label: "products", level: 2, icon: "table", kind: "item" },
];

@customElement("bq-explorer")
class BqExplorer extends LitElement {
  static styles = [shared, css`
    :host { width: 374px; border-right: 1px solid #dadce0; display: flex; flex-direction: column; flex: none; }
    .head { height: 62px; border-bottom: 1px solid #dadce0; display: flex; align-items: center; padding: 0 15px 0 20px; }
    h2 { margin: 0; font-weight: 400; font-size: 22.500px; letter-spacing: .1px; flex: 1; line-height: 60px; }
    .blue { color: #0968e5; }
    .add { display: flex; align-items: center; gap: 7px; font-weight: 500; font-size: 17.500px; letter-spacing: .85px; }
    .vl { width: 1px; height: 35px; background: #dadce0; margin: 0 19px 0 20px; }
    .search { margin: 17px 15px 0; height: 45px; width: 343px; border: 1px solid #80868b; border-radius: 5px; display: flex; align-items: center; padding: 0 15px 0 13px; color: #5f6368; font-size: 17.500px; }
    .search span { flex: 1; margin-left: 4px; letter-spacing: -.03px; padding-top: 1px; }
    .toggle { height: 35px; margin: 0 15px 6px; display: flex; align-items: center; font-size: 17.500px; }
    .sw { width: 45px; height: 18px; border: 1px solid #80868b; border-radius: 9px; background: #f1f1f1; display: flex; align-items: center; margin-right: 5px; }
    .knob { width: 25px; height: 25px; border-radius: 50%; background: #202124; margin-left: -1px; flex: none; display: flex; align-items: center; justify-content: center; box-shadow: 0 1px 3px #0006; }
    .knob i { width: 15px; height: 2px; background: #fff; }
    .toggle b { font-weight: 400; padding-top: 4px; }
    .tree { height: 646px; flex: none; display: flex; overflow: hidden; }
    .list { width: 338px; margin-top: -16px; }
    .row { height: 40px; display: flex; align-items: center; padding-right: 7px; font-size: 17.500px; }
    .row.group { height: 37.500px; }
    .row.selected { background: #e6effe; }
    .arrow { width: 24px; display: flex; justify-content: center; color: #202124; flex: none; }
    .l0 { padding-left: 8px; } .l1 { padding-left: 34px; } .l2 { padding-left: 97px; }
    .lab { flex: 1; display: flex; align-items: center; gap: 8px; color: #5f6368; margin-left: 14px; padding-bottom: 8px; }
    .l2 .lab { margin-left: 0; gap: 7.500px; }
    .group .lab { padding-bottom: 4px; }
    .project .lab { padding: 1px 0 0; margin-left: 13px; }
    .lab span { color: #202124; white-space: nowrap; }
    .end { color: #5f6368; display: flex; gap: 21.500px; align-items: center; }
    .thumb { width: 12px; margin: 17px 1px 2px 7px; background: #c4c4c4; flex: none; }
    .gutter { width: 15px; background: #f4f8f6; display: flex; align-items: center; justify-content: center; }
    .gutter i { width: 4px; height: 28px; border-radius: 2px; background: #80868b; margin-top: -104px; }
    .foot { flex: 1; border-top: 1px solid #dadce0; display: flex; align-items: center; padding-left: 20px; }
    .foot h2 { flex: none; padding-top: 13px; line-height: 37px; }
    .badge { margin: 14px 0 0 11px; height: 25px; width: 91px; border-radius: 3px; background: #455a64; color: #fff; font-size: 15px; font-weight: 500; line-height: 25px; text-align: center; letter-spacing: .1px; }
    .foot .vl { align-self: flex-end; height: 42px; margin: 0 13px 0 80px; }
    .foot .blue { padding-top: 11px; }
  `];
  render() {
    return html`
      <div class="head"><h2>Explorador</h2><span class="add blue">${icon("add", 18)}Agregar</span><i class="vl"></i><span class="blue">${icon("collapseLine", 16)}</span></div>
      <div class="search">${icon("search", 24)}<span>Buscar recursos de BigQuery</span>${icon("help", 23)}</div>
      <div class="toggle"><div class="sw"><div class="knob"><i></i></div></div><b>Mostrar solo los destacados</b></div>
      <div class="tree">
        <div class="list">${TREE.map((t) => html`
          <div class="row l${t.level} ${t.kind}">
            ${t.level < 2 ? html`<span class="arrow">${icon(t.open ? "triDown" : "triRight", 17)}</span>` : nothing}
            <div class="lab">${t.icon ? icon(t.icon, 18) : nothing}<span>${t.label}</span></div>
            <div class="end">${t.kind === "group" ? nothing : icon("star", 21)}${icon("dots", 18)}</div>
          </div>`)}
        </div>
        <div class="thumb"></div>
        <div class="gutter"><i></i></div>
      </div>
      <div class="foot"><h2>Repositorio</h2><span class="badge">Vista previa</span><i class="vl"></i><span class="blue">${icon("up", 29)}</span></div>`;
  }
}

@customElement("bq-rail")
class BqRail extends LitElement {
  static styles = [shared, css`
    :host { width: 80px; border-right: 1px solid #dadce0; display: flex; flex-direction: column; flex: none; color: #5f6368; }
    .logo { height: 61px; border-bottom: 1px solid #dadce0; display: grid; place-items: center; color: #757575; margin-bottom: 7.500px; }
    .cell { height: 45px; display: grid; place-items: center; padding-left: 1px; }
    .dot { width: 5px; height: 5px; border-radius: 50%; background: #5f6368; }
    .sec { height: 46px; border-top: 1px solid #dadce0; display: grid; place-items: center; padding: 0 0 1px 1px; }
    .first { margin-top: auto; }
    .sec.note { display: flex; overflow: hidden; padding: 0 0 0 31px; align-items: center; color: #5f6368; }
    .note span { color: #202124; font-size: 17.500px; margin-left: 26px; padding-bottom: 2px; }
    .sec.last { height: 61px; color: #3c4043; padding: 2px 0 0 2px; }
  `];
  render() {
    const names = ["", "hub", "lock", "", "chart", "explore", "blocks", "dash", "storage", "diamond", "", "list", "build"];
    return html`
      <div class="logo">${icon("bq", 35)}</div>
      ${names.map((n) => html`<div class="cell">${n ? icon(n, n === "blocks" || n === "diamond" ? 20 : 18.5) : html`<i class="dot"></i>`}</div>`)}
      <div class="sec first">${icon("share", 18)}</div>
      <div class="sec">${icon("gear", 22)}</div>
      <div class="sec note">${icon("notes", 18)}<span>N</span></div>
      <div class="sec last">${icon("expandLine", 14)}</div>`;
  }
}

const DETAILS: [string[], string][] = [
  [["ID de conjunto de", "datos"], "iron-axon-452918-s2.delivery_bronze"],
  [["Creado"], "22 mar 2025, 11:41:59\u2009a.m. UTC+1"],
  [["Vencimiento", "predeterminado de la", "tabla"], "Nunca"],
  [["Última modificación"], "22 mar 2025, 11:41:59\u2009a.m. UTC+1"],
  [["Ubicación de los", "datos"], "europe-west1"],
  [["Descripción"], ""],
  [["Intercalación", "predeterminada"], ""],
  [["Modo de redondeo", "predeterminado"], "ROUNDING_MODE_UNSPECIFIED"],
  [["Ventana de viaje en el", "tiempo"], "7 días"],
  [["Sin distinción entre", "mayúsculas y", "minúsculas"], "false"],
  [["Etiquetas"], ""],
  [["Etiquetas"], ""],
];

@customElement("bq-main")
class BqMain extends LitElement {
  static styles = [shared, css`
    :host { flex: 1; min-width: 0; display: flex; flex-direction: column; }
    .strip { height: 62px; background: #f1f3f6; border-bottom: 1px solid #dadce0; display: flex; align-items: flex-end; color: #5f6368; font-size: 17.500px; font-weight: 500; letter-spacing: .75px; }
    .tab { height: 45px; margin-bottom: 1px; display: flex; align-items: center; flex: none; }
    .tab span { white-space: nowrap; }
    .home { padding-left: 19px; width: 102px; }
    .tab .c { color: #3c4043; margin-left: 7px; }
    .x { color: #3c4043; margin-left: 8.500px; }
    .home .c { margin-left: 13px; } .home .x { margin-left: 8px; }
    .q { padding-left: 11px; width: 198px; } .q span { margin-left: 6px; width: 105px; }
    .on { width: 205px; background: #fff; border-radius: 6px 6px 0 0; border-bottom: 3px solid #0968e5; color: #0968e5; padding: 3px 0 0 14px; }
    .on span { margin-left: 7px; width: 109px; }
    .plus { margin: 0 0 14px 22px; color: #0968e5; }
    .vl { width: 1px; height: 35px; background: #dadce0; margin: 0 11px 5px 16px; }
    .c2 { margin-bottom: 18px; color: #3c4043; }
    .title { height: 62px; border-bottom: 1px solid #dadce0; display: flex; align-items: center; padding-left: 12px; }
    .title h1 { margin: 0 0 0 27px; padding-bottom: 2px; font-weight: 400; font-size: 22.500px; width: 627px; letter-spacing: .25px; }
    .create { display: flex; align-items: center; gap: 7px; color: #0968e5; font-weight: 500; font-size: 17.500px; }
    .body { height: 687px; padding: 31px 0 0 30px; overflow: hidden; }
    .body h2 { margin: 0; font-weight: 400; font-size: 27.500px; line-height: 36px; letter-spacing: .07px; }
    .table { margin-top: 19px; border-top: 1px solid #d4d7dc; }
    .r { display: grid; grid-template-columns: 205px 1fr; padding: 2px 0; border-bottom: 1px solid #d4d7dc; line-height: 25px; }
    .k { font-weight: 500; font-size: 17.500px; letter-spacing: .3px; }
    .k div { white-space: nowrap; }
    .v { font-size: 17.500px; color: #5f6368; margin: 1px 0 -1px; }
    .r:first-child .v { padding-top: 3px; }
    .jobs { flex: 1; border-top: 1px solid #dadce0; padding-left: 30px; font-size: 22.500px; line-height: 43px; letter-spacing: -.05px; }
  `];
  render() {
    return html`
      <div class="strip">
        <div class="tab home">${icon("home", 15)}<i class="c">${icon("caret", 11)}</i><i class="x">${icon("close", 22)}</i></div>
        <div class="tab q">${icon("bq", 16)}<span>Consult…ulo</span><i class="c">${icon("caret", 11)}</i><i class="x">${icon("close", 22)}</i></div>
        <div class="tab on">${icon("dataset", 15)}<span>delivery…nze</span><i class="c">${icon("caret", 11)}</i><i class="x">${icon("close", 22)}</i></div>
        <div class="plus">${icon("addBox", 18)}</div><i class="vl"></i><span class="c2">${icon("caret", 12)}</span>
      </div>
      <div class="title">${icon("dataset", 18)}<h1>delivery_bronze</h1><span class="create">${icon("addBox", 18)}Crear</span></div>
      <div class="body"><h2>Información del conjunto de datos</h2>
        <div class="table">${DETAILS.map(([k, v]) => html`<div class="r"><div class="k">${k.map((l) => html`<div>${l}</div>`)}</div><div class="v">${v}</div></div>`)}</div>
      </div>
      <div class="jobs">Historial de trabajos</div>`;
  }
}

@customElement("labelled-field")
class LabelledField extends LitElement {
  @property() label = "";
  @property() value = "";
  static styles = [shared, css`
    fieldset { margin: 0; width: 280px; height: 54px; border: 1px solid #80868b; border-radius: 5px; padding: 0 14px; min-width: 0; }
    legend { font-size: 15px; line-height: 18px; color: #5f6368; padding: 0 5px; margin-left: -5px; }
    div { font-size: 17.500px; line-height: 28px; color: #3c4043; }
  `];
  render() { return html`<fieldset><legend>${this.label}</legend><div>${this.value}</div></fieldset>`; }
}

@customElement("edit-drawer")
class EditDrawer extends LitElement {
  static styles = [shared, css`
    :host { position: absolute; top: 0; right: 0; width: 719px; height: 923px; background: #fff; display: flex; box-shadow: -2px 0 6px #0004; }
    .col { width: 707px; }
    .head { height: 61px; width: 700px; border-bottom: 1px solid #dadce0; padding-left: 30px; font-size: 22.500px; line-height: 61px; }
    .in { padding-left: 30px; width: 670px; }
    h2 { margin: 0; font-weight: 400; font-size: 27.500px; line-height: 36px; letter-spacing: .15px; }
    .v { padding-top: 30px; }
    .chk { display: flex; align-items: center; height: 30px; margin-top: 12px; padding-left: 6px; font-size: 17.500px; }
    .box { width: 23px; height: 23px; border: 2px solid #5f6368; border-radius: 3px; margin-right: 11px; }
    .chk .h { color: #5f6368; margin-left: 13px; }
    .max { margin-top: 30px; height: 45px; border: 1px solid #e1e2e4; border-radius: 5px; color: #6b6f74; font-size: 17.500px; line-height: 45px; display: flex; justify-content: space-between; padding: 0 12px 0 14px; }
    .max span + span { line-height: 43px; }
    .d { padding-top: 20px; }
    .area { height: 65px; border: 1px solid #80868b; border-radius: 5px; margin-top: 16px; }
    .sec { display: flex; align-items: center; justify-content: space-between; }
    .e1 { padding-top: 23px; }
    p { margin: 0; font-size: 15px; line-height: 20px; color: #5f6368; white-space: nowrap; }
    p span { display: flex; align-items: center; }
    a { color: #0968e5; border-bottom: 1px solid #0968e5; margin: 0 3px -1px 4px; line-height: 20px; }
    p .icon { color: #0968e5; margin-left: -1px; }
    .p1 { margin-top: 11px; }
    .fields { display: flex; gap: 20px; margin-top: 34px; }
    .btn { margin-top: 27px; width: 213px; height: 35px; border: 1px solid #4a86dc; border-radius: 4px; color: #0968e5; font-weight: 500; font-size: 17.500px; letter-spacing: .6px; display: flex; align-items: center; padding-left: 16px; gap: 6px; white-space: nowrap; }
    .e2 { padding-top: 23px; }
    .split { width: 245px; height: 40px; border: 1px solid #4a86dc; border-radius: 4px; color: #0968e5; font-weight: 500; font-size: 17.500px; letter-spacing: .35px; display: flex; line-height: 38px; }
    .split span { width: 211px; border-right: 1px solid #4a86dc; padding-left: 15px; }
    .split i { flex: 1; display: grid; place-items: center; }
    .e3 { padding-top: 43px; }
    .bar { width: 12px; height: 849px; background: #c8c8c8; margin-top: 1px; }
  `];
  render() {
    return html`<div class="col">
      <div class="head">Editar detalles</div>
      <div class="in">
        <h2 class="v">Vencimiento predeterminado de la tabla</h2>
        <div class="chk"><i class="box"></i>Habilitar el vencimiento de la tabla<span class="h">${icon("help", 23)}</span></div>
        <div class="max"><span>Máxima antigüedad predeterminada de la tabla</span><span>Días</span></div>
        <h2 class="d">Descripción</h2>
        <div class="area"></div>
        <div class="sec e1"><h2>Etiquetas</h2>${icon("up", 30)}</div>
        <p class="p1">Las etiquetas ayudan a organizar los conjuntos de datos y las tablas (p. ej., cost_center:sales o<span>env:prod). <a>Más información</a>${icon("ext", 15)}</span></p>
        <div class="fields"><labelled-field label="Clave 1 *" value="source"></labelled-field><labelled-field label="Valor 1" value="bq_subs"></labelled-field></div>
        <div class="btn">${icon("add", 20)}Agregar etiquetas</div>
        <div class="sec e2"><h2>Etiquetas</h2>${icon("up", 30)}</div>
        <p class="p1">Las etiquetas te ayudan a administrar y aplicar políticas en los recursos. Constan de una clave<span>de etiqueta única y un conjunto de valores de etiqueta. <a>Más información</a>${icon("ext", 15)}</span></p>
        <div class="split"><span>Selecciona el permiso</span><i>${icon("caret", 13)}</i></div>
        <div class="sec e3"><h2>Opciones avanzadas</h2>${icon("down", 30)}</div>
      </div></div>
      <div class="bar"></div>`;
  }
}

@customElement("task-bar")
class TaskBar extends LitElement {
  static styles = [shared, css`
    :host { height: 60px; border-top: 1px solid #b9b5b7; display: flex; align-items: center; font-family: "Open Sans", "Noto Sans", sans-serif; font-size: 14.500px; color: #1b1b1b;
      background: linear-gradient(90deg, #ebecf1 0, #f1eff1 8%, #f2efec 15%, #f9e8de 22%, #f9e8df 30%, #f3e1dc 38%, #f0dedb 48%, #e8dad5 62%, #ecdbd6 68%, #f0dcd5 78%, #efdfdc 88%, #e7dfe3 100%); }
    .w { margin-left: 25px; } .wt { margin: -2px 0 0 10px; width: 438px; line-height: 20px; letter-spacing: -.25px; }
    .wt span { display: block; color: #5c5c5c; }
    .sb { margin-left: 17px; width: 274px; height: 39px; border-radius: 20px; border: 1px solid #e0d7d3; border-bottom-color: #c9bfbb; background: linear-gradient(90deg, #fdf9f6, #fcf8f2); display: flex; align-items: center; padding: 0 6px 0 13px; font-size: 17px; letter-spacing: -.4px; color: #5a5a5a; }
    .sb .icon { color: #222; } .sb span { margin-left: 13px; flex: 1; }
    .apps { display: flex; margin-left: 4px; }
    .app { width: 55px; height: 59px; display: flex; align-items: center; justify-content: center; position: relative; }
    .on .tile { width: 49px; height: 49px; border-radius: 5px; background: #f8f0ed; border: 1px solid #eadfdb; display: grid; place-items: center; }
    .mark { position: absolute; bottom: 5px; width: 8px; height: 4px; border-radius: 2px; background: #857c7b; }
    .on .mark { width: 20px; background: #0c6cd0; }
    .hp { width: 30px; height: 30px; background: #0c96d6; color: #fff; font: italic 600 11px/28px "Open Sans", sans-serif; text-align: center; letter-spacing: -.6px; border-radius: 1px; }
    .hp b { font-size: 14px; }
    .dot { position: absolute; left: 28px; top: 8px; width: 20px; height: 20px; border-radius: 50%; background: #fdb913; }
    .tray { display: flex; align-items: center; margin-left: 168px; }
    .t2 { margin-left: 21px; } .t3 { margin-left: 17px; } .t4 { margin-left: 19px; } .t5 { margin-left: 9px; } .t6 { margin-left: 9px; }
    .time { margin: -2px 24px 0 auto; text-align: right; line-height: 20px; letter-spacing: -.05px; }
  `];
  render() {
    const apps = ["taskview", "folder", "edge", "store", "hp", "question", "mcafee", "outlook", "docker", "vscode", "putty"];
    return html`
      <span class="w">${icon("wind", 30)}</span><div class="wt">16°C<span>Ventoso</span></div>
      ${icon("windows", 29)}
      <div class="sb">${icon("winSearch", 19)}<span>Búsqueda</span>
        <svg width="56" height="34" viewBox="0 0 56 34">
          <path d="M0 28q8-8 20-9h24l11 8q-6 7-28 7Q6 34 0 28z" fill="#d9ad7c"/><path d="M0 27q10 4 27 4t28-4" stroke="#b98a55" fill="none"/>
          <path d="M5 14l9-3 4 2 8-5 2 14-9 6-12 1z" fill="#eef2ea" stroke="#8a7ea8"/><path d="M16 13l2 14M9 17l5-1M9 20l5-1M20 16l5-2M20 20l5-3" stroke="#6fa36a" stroke-width="1.300"/>
          <path d="M16 17l5-12 3 1.500-6 11z" fill="#f5a442" stroke="#c9574c" stroke-width=".6"/><path d="M21 5l1-2.500 3 1.500-1 2.500z" fill="#e8605a"/>
          <path d="M37 15q0-10 7.500-10T52 15v12q0 3-3 3h-9q-3 0-3-3z" fill="#1580ee"/><path d="M39 8h11v4q-5.500 4-11 0z" fill="#2ba3f7"/><path d="M39 21q5.500 3 11 0v6H39z" fill="#5f4fe0"/><path d="M41.500 5q0-4 3-4t3 4" fill="none" stroke="#1158b8" stroke-width="1.500"/><circle cx="44.500" cy="16" r="1.400" fill="#e8f4ff"/>
        </svg></div>
      <div class="apps">${apps.map((a, i) => html`<div class="app ${a === "edge" ? "on" : ""}">
        ${a === "hp" ? html`<div class="hp">my<b>hp</b></div>` : html`<div class="tile">${icon(a, 29)}</div>`}
        ${a === "question" ? html`<i class="dot"></i>` : nothing}
        ${i > 6 || a === "edge" ? html`<i class="mark"></i>` : nothing}</div>`)}</div>
      <div class="tray">${icon("chevUp", 17)}<span class="t2">${icon("cloudOff", 22)}</span><span class="t3">${icon("sync", 22)}</span><span class="t4">${icon("wifi", 20)}</span><span class="t5">${icon("mute", 21)}</span><span class="t6">${icon("battery", 22)}</span></div>
      <div class="time">11:53<br>22/03/2025</div>`;
  }
}

@customElement("app-root")
class AppRoot extends LitElement {
  static styles = [shared, css`
    :host { width: 1920px; height: 1080px; overflow: hidden; }
    .wrap { height: 927px; background: #f7f7f7; padding: 0 6px 4px 5px; }
    .page { height: 923px; position: relative; overflow: hidden; border-radius: 12px; background: #fff; box-shadow: 0 0 2px #0005; }
    .head { height: 61px; border-bottom: 1px solid #c8cace; display: flex; align-items: center; padding-left: 21px; }
    .head > .icon { color: #5f6368; }
    .logo { margin-left: 28px; width: 173px; font-family: Lato, Roboto, sans-serif; font-size: 25.500px; line-height: 50px; white-space: nowrap; display: flex; margin-top: -4px; font-weight: 400; }
    .logo b { font-weight: 700; letter-spacing: -.8px; }
    .logo em { font-style: normal; color: #5f6368; margin-left: 6px; letter-spacing: -.6px; }
    .b { color: #4285f4; } .r { color: #ea4335; } .y { color: #fbbc04; } .g { color: #34a853; }
    .proj { width: 194px; height: 45px; border: 1px solid #747775; border-radius: 5px; display: flex; align-items: center; padding: 1px 0 0 17px; gap: 12px; font-size: 17.500px; white-space: nowrap; }
    .proj .icon { color: #5f6368; }
    .find { margin-left: 141px; width: 1000px; height: 45px; border: 1px solid #747775; border-radius: 5px; background: #f1f3f6; padding-left: 22px; font-size: 17.500px; line-height: 45px; }
    .cols { display: flex; height: 862px; }
    .snack { position: absolute; left: 709px; top: 848px; width: 520px; height: 65px; border-radius: 5px; background: #202124; color: #fff; display: flex; align-items: center; padding-left: 20px; font-size: 17.500px; box-shadow: 0 4px 10px #0008; }
    .snack .go { margin-left: 59px; color: #8ab4f8; font-weight: 500; width: 132px; letter-spacing: .35px; }
    .scrim { position: absolute; inset: 0; background: rgba(0, 0, 0, .32); }
  `];
  render() {
    return html`
      <browser-bar></browser-bar>
      <div class="wrap"><div class="page">
        <div class="head">${icon("menu", 28)}
          <div class="logo"><b><span class="b">G</span><span class="r">o</span><span class="y">o</span><span class="b">g</span><span class="g">l</span><span class="r">e</span></b><em>Cloud</em></div>
          <div class="proj">${icon("hex", 19)}My First Project</div><div class="find">big</div>
        </div>
        <div class="cols"><bq-rail></bq-rail><bq-explorer></bq-explorer><bq-main></bq-main></div>
        <div class="snack">Se creó "raw_events_delivery".<span class="go">Ir a la tabla</span>${icon("close", 27)}</div>
        <div class="scrim"></div>
        <edit-drawer></edit-drawer>
      </div></div>
      <task-bar></task-bar>`;
  }
}
